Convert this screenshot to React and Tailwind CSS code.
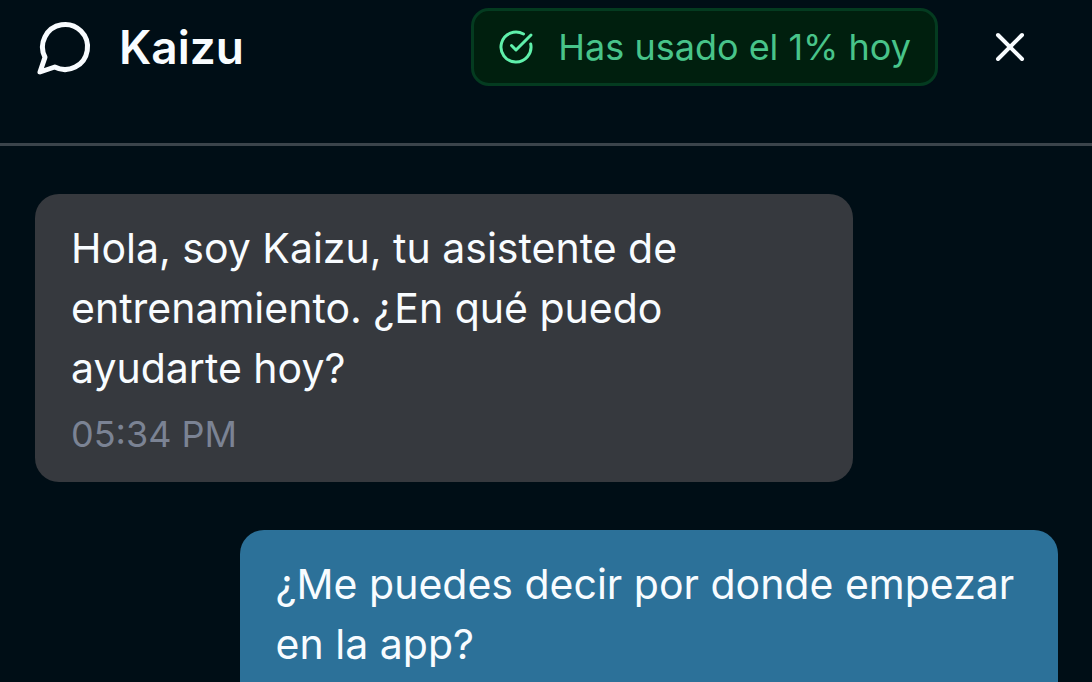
import { CircleCheckBig, X } from "lucide-react";

const messages = [
  {
    id: 1,
    role: "assistant",
    text: "Hola, soy Kaizu, tu asistente de entrenamiento. ¿En qué puedo ayudarte hoy?",
    time: "05:34 PM",
  },
  {
    id: 2,
    role: "user",
    text: "¿Me puedes decir por donde empezar en la app?",
  },
];

const ChatIcon = () => (
  <svg
    viewBox="0 0 24 24"
    fill="none"
    stroke="currentColor"
    strokeWidth="2"
    strokeLinecap="round"
    strokeLinejoin="round"
    className="size-15 shrink-0"
    aria-hidden="true"
  >
    <path d="M7.9 20A9 9 0 1 0 4 16.1L2 22Z" />
  </svg>
);

const Message = ({ message }) => {
  const isUser = message.role === "user";

  return (
    <div className={isUser ? "flex justify-end" : "flex justify-start"}>
      <div
        className={`max-w-[80%] rounded-3xl px-9 pt-6 ${
          isUser ? "bg-[#2c7199] pb-12" : "bg-[#36393e] pb-6"
        }`}
      >
        <p className="text-[41px] leading-[60px]">{message.text}</p>
        {message.time && (
          <p className="mt-3 text-[36px] leading-[48px] text-[#7b8394]">
            {message.time}
          </p>
        )}
      </div>
    </div>
  );
};

const App = () => {
  return (
    <div className="h-screen overflow-hidden flex flex-col bg-[#000e16] text-[#f8fcff] font-['Inter',sans-serif]">
      <header className="shrink-0 flex items-center justify-between border-b-3 border-[#3b444b] pl-[35px] pr-[34px] pt-2 pb-[57px]">
        <div className="flex items-center gap-6">
          <ChatIcon />
          <h1 className="text-[46px] leading-[60px] font-semibold">Kaizu</h1>
        </div>
        <div className="flex items-center gap-6">
          <div className="flex items-center gap-6 rounded-[18px] border-3 border-[#043b20] bg-[#001f0e] px-6 py-3 text-[#48c48a]">
            <CircleCheckBig className="size-9 shrink-0 text-[#5ff0ab]" />
            <span className="text-[36px] leading-[48px]">
              Has usado el 1% hoy
            </span>
          </div>
          <button type="button" aria-label="Cerrar" className="px-6">
            <X className="size-12" />
          </button>
        </div>
      </header>

      <main className="flex-1 min-h-0 overflow-hidden flex flex-col gap-12 pl-[35px] pr-[34px] pt-12">
        {messages.map((message) => (
          <Message key={message.id} message={message} />
        ))}
      </main>
    </div>
  );
};

export default App;
